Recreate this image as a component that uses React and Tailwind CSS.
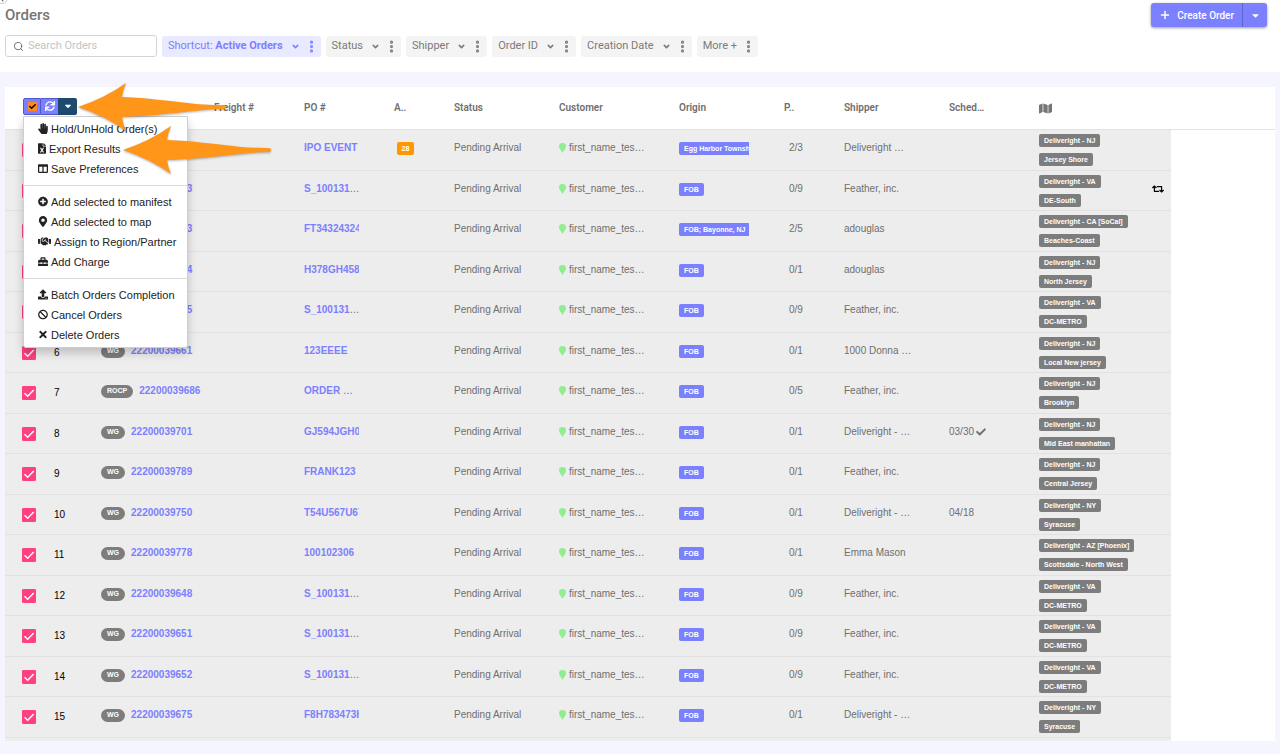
import React, { useState } from 'react';
import clsx from 'clsx';
import { ChevronDown, EllipsisVertical, Plus, Search } from 'lucide-react';
import {
  FaBan, FaCaretDown, FaCheck, FaChevronLeft, FaColumns, FaFileExcel, FaHandPaper, FaHandshake,
  FaMap, FaMapMarkerAlt, FaPlusCircle, FaRetweet, FaSync, FaTimes, FaToolbox, FaUpload
} from 'react-icons/fa';

const FILTERS = [
  { label: 'Shortcut:', value: 'Active Orders', active: true },
  { label: 'Status' },
  { label: 'Shipper' },
  { label: 'Order ID' },
  { label: 'Creation Date' },
  { label: 'More +', noCaret: true }
];

const MENU = [
  [
    { icon: FaHandPaper, size: 'w-[10px]', label: 'Hold/UnHold Order(s)' },
    { icon: FaFileExcel, size: 'w-2', label: 'Export Results' },
    { icon: FaColumns, size: 'w-[10px]', label: 'Save Preferences' }
  ],
  [
    { icon: FaPlusCircle, size: 'w-[10px]', label: 'Add selected to manifest' },
    { icon: FaMapMarkerAlt, size: 'w-[10px]', label: 'Add selected to map' },
    { icon: FaHandshake, size: 'w-[13px]', label: 'Assign to Region/Partner' },
    { icon: FaToolbox, size: 'w-[10px]', label: 'Add Charge' }
  ],
  [
    { icon: FaUpload, size: 'w-[10px]', label: 'Batch Orders Completion' },
    { icon: FaBan, size: 'w-[10px]', label: 'Cancel Orders' },
    { icon: FaTimes, size: 'w-[10px]', label: 'Delete Orders' }
  ]
];

const COL_WIDTHS = ['w-[39px]', 'w-[47px]', 'w-[113px]', 'w-[90px]', 'w-[90px]', 'w-[60px]', 'w-[105px]', 'w-[120px]', 'w-[105px]', 'w-[60px]', 'w-[105px]', 'w-[90px]', 'w-[105px]', 'w-[37px]', ''];

const ORDERS = [
  { type: 'WG', id: '', po: 'IPO EVENT', alert: 28, origin: 'Egg Harbor Township, NJ', pieces: '2/3', shipper: 'Deliveright …', tags: ['Deliveright - NJ', 'Jersey Shore'] },
  { type: 'WG', id: '22200039653', po: 'S_100131', more: true, origin: 'FOB', pieces: '0/9', shipper: 'Feather, inc.', tags: ['Deliveright - VA', 'DE-South'], swap: true },
  { type: 'WG', id: '22200039683', po: 'FT34324324', origin: 'FOB; Bayonne, NJ', pieces: '2/5', shipper: 'adouglas', tags: ['Deliveright - CA [SoCal]', 'Beaches-Coast'] },
  { type: 'WG', id: '22200039684', po: 'H378GH458', origin: 'FOB', pieces: '0/1', shipper: 'adouglas', tags: ['Deliveright - NJ', 'North Jersey'] },
  { type: 'WG', id: '22200039655', po: 'S_100131', more: true, origin: 'FOB', pieces: '0/9', shipper: 'Feather, inc.', tags: ['Deliveright - VA', 'DC-METRO'] },
  { type: 'WG', id: '22200039661', po: '123EEEE', origin: 'FOB', pieces: '0/1', shipper: '1000 Donna …', tags: ['Deliveright - NJ', 'Local New jersey'] },
  { type: 'ROCP', id: '22200039686', po: 'ORDER ', more: true, origin: 'FOB', pieces: '0/5', shipper: 'Feather, inc.', tags: ['Deliveright - NJ', 'Brooklyn'] },
  { type: 'WG', id: '22200039701', po: 'GJ594JGH0', origin: 'FOB', pieces: '0/1', shipper: 'Deliveright - …', sched: '03/30', confirmed: true, tags: ['Deliveright - NJ', 'Mid East manhattan'] },
  { type: 'WG', id: '22200039789', po: 'FRANK123', origin: 'FOB', pieces: '0/1', shipper: 'Feather, inc.', tags: ['Deliveright - NJ', 'Central Jersey'] },
  { type: 'WG', id: '22200039750', po: 'T54U567U67', origin: 'FOB', pieces: '0/1', shipper: 'Deliveright - …', sched: '04/18', tags: ['Deliveright - NY', 'Syracuse'] },
  { type: 'WG', id: '22200039778', po: '100102306', origin: 'FOB', pieces: '0/1', shipper: 'Emma Mason', tags: ['Deliveright - AZ [Phoenix]', 'Scottsdale - North West'] },
  { type: 'WG', id: '22200039648', po: 'S_100131', more: true, origin: 'FOB', pieces: '0/9', shipper: 'Feather, inc.', tags: ['Deliveright - VA', 'DC-METRO'] },
  { type: 'WG', id: '22200039651', po: 'S_100131', more: true, origin: 'FOB', pieces: '0/9', shipper: 'Feather, inc.', tags: ['Deliveright - VA', 'DC-METRO'] },
  { type: 'WG', id: '22200039652', po: 'S_100131', more: true, origin: 'FOB', pieces: '0/9', shipper: 'Feather, inc.', tags: ['Deliveright - VA', 'DC-METRO'] },
  { type: 'WG', id: '22200039675', po: 'F8H783473H', origin: 'FOB', pieces: '0/1', shipper: 'Deliveright - …', tags: ['Deliveright - NY', 'Syracuse'] }
];

function FilterChip({ filter }) {
  return (
    <div className={clsx('flex h-[21px] items-center rounded-[3px] pr-0.5 pl-1.5 text-[11px]', filter.active ? 'bg-[#e9e9ff] text-[#7b80ff]' : 'bg-[#f4f4f4] text-[#7a7a7a]')}>
      <button type="button" className="flex items-center gap-2 whitespace-nowrap">
        <span>{filter.label}{filter.value && <> <b className="font-bold">{filter.value}</b></>}</span>
        {!filter.noCaret && <ChevronDown className="size-[9px]" strokeWidth={4} />}
      </button>
      <button type="button" aria-label={`${filter.label} options`} className="ml-1">
        <EllipsisVertical className="size-[15px]" strokeWidth={3} />
      </button>
    </div>
  );
}

function ActionsMenu() {
  return (
    <ul className="absolute top-[18px] left-0 z-10 w-[165px] rounded-b-[3px] border border-[#cfcfcf] bg-white py-0.5 shadow-[0_5px_10px_rgba(0,0,0,0.2)]">
      {MENU.map((group, g) => (
        <React.Fragment key={g}>
          {g > 0 && <li className="my-1.5 h-px bg-[#dcdcdc]" />}
          {group.map(({ icon: Icon, size, label }) => (
            <li key={label}>
              <button type="button" className="flex h-5 w-full items-center gap-[3px] pl-3.5 text-[11px] font-normal whitespace-nowrap text-[#222]">
                <Icon className={clsx('h-[11px] shrink-0', size)} />
                {label}
              </button>
            </li>
          ))}
        </React.Fragment>
      ))}
    </ul>
  );
}

function Arrow({ className }) {
  return (
    <svg viewBox="0 0 150 52" className={clsx('pointer-events-none absolute z-20 h-[52px] w-[150px] drop-shadow-[0_1px_1px_rgba(0,0,0,0.3)]', className)}>
      <path fill="#ff9519" d="M0 25 Q27 16 48 1 Q45 8 44 15 C70 16 90 19 110 21 C125 23 137 23 145 23 Q148 23 148 25 Q148 27 145 27 C120 27 95 33 44 35 Q45 42 48 49 Q27 34 0 25Z" />
    </svg>
  );
}

function Tag({ children }) {
  return <span className="flex h-[13px] items-center rounded-[2px] bg-[#7d7d7d] px-[5px] text-[7px] font-bold text-white">{children}</span>;
}

function OrderRow({ order, number, checked, onToggle }) {
  const cell = 'border-b border-[#e2e2e2] bg-[#ededed] pt-2.5 pl-2.5 align-top whitespace-nowrap';
  return (
    <tr className="odd:h-[41px] even:h-[40px]">
      <td className="border-b border-[#e2e2e2] bg-[#ededed] pt-[13px] pl-[17px] align-top">
        <label className="grid size-[14px] place-items-center">
          <input type="checkbox" aria-label={`Select order ${number}`} checked={checked} onChange={onToggle} className="col-start-1 row-start-1 size-[14px] appearance-none rounded-[1px] border border-[#ff4081] checked:bg-[#ff4081]" />
          <svg viewBox="0 0 14 14" className="pointer-events-none col-start-1 row-start-1 size-[14px]">
            <path d="M2.5 7.2 5.7 10.2 11.7 4" fill="none" stroke="#fff" strokeWidth="1.5" />
          </svg>
        </label>
      </td>
      <td className={clsx(cell, 'text-black')}><div className="pt-0.5">{number}</div></td>
      <td className={cell}>
        <div className="flex h-4 items-center gap-1.5">
          <span className="flex h-[13px] items-center rounded-full bg-[#7d7d7d] px-1.5 text-[7px] font-bold text-white">{order.type}</span>
          <a href="#" className="font-bold text-[#7b80ff]">{order.id}</a>
        </div>
      </td>
      <td className={cell} />
      <td className={cell}>
        <div className="w-[55px] overflow-hidden whitespace-pre">
          <a href="#" className="font-bold text-[#7b80ff]">{order.po}</a>{order.more && '…'}
        </div>
      </td>
      <td className={cell}>
        {order.alert && <span className="mt-0.5 ml-[3px] flex h-[13px] w-[17px] items-center justify-center rounded-[2px] bg-[#ff9800] text-[7px] font-bold text-white">{order.alert}</span>}
      </td>
      <td className={cell}>Pending Arrival</td>
      <td className={cell}>
        <div className="flex items-center gap-[3px]">
          <svg viewBox="0 0 7 10" className="h-[10px] w-[7px]">
            <path fill="#90ee90" d="M3.5 0A3.5 3.5 0 0 1 7 3.6C7 5.8 5 7 3.5 10 2 7 0 5.8 0 3.6A3.5 3.5 0 0 1 3.5 0Z" />
          </svg>
          first_name_tes…
        </div>
      </td>
      <td className={cell}>
        <div className="flex w-[70px] overflow-hidden pt-0.5">
          <span className="flex h-[13px] shrink-0 items-center rounded-[2px] bg-[#7b80ff] px-[5px] text-[7px] font-bold text-white">{order.origin}</span>
        </div>
      </td>
      <td className={cell}><div className="pl-[5px]">{order.pieces}</div></td>
      <td className={cell}>{order.shipper}</td>
      <td className={cell}>
        <div className="flex items-center gap-0.5">
          {order.sched}
          {order.confirmed && <FaCheck className="size-[10px]" />}
        </div>
      </td>
      <td className="border-b border-[#e2e2e2] bg-[#ededed] pt-1 pl-2.5 align-top whitespace-nowrap">
        <div className="flex flex-col items-start gap-1.5">
          {order.tags.map((tag) => <Tag key={tag}>{tag}</Tag>)}
        </div>
      </td>
      <td className="border-b border-[#e2e2e2] bg-[#ededed] pt-2.5 pl-[18px] align-top">
        {order.swap && <FaRetweet className="h-4 w-3 text-black" />}
      </td>
      <td />
    </tr>
  );
}

export default function App() {
  const [selected, setSelected] = useState(() => ORDERS.map(() => true));
  const [menuOpen, setMenuOpen] = useState(true);
  const allSelected = selected.every(Boolean);

  return (
    <div className="min-h-screen bg-[#f5f5ff] font-['Liberation_Sans',Arial,sans-serif] text-[#6f6f6f]">
      <header className="relative overflow-hidden bg-white pt-[3px] pr-[13px] pb-[15px] pl-[5px] font-[Roboto,sans-serif]">
        <button type="button" aria-label="Collapse sidebar" className="absolute -top-2 -left-1 flex size-3 items-end justify-center rounded-full border border-[#ccc] bg-white pb-px text-[#555]">
          <FaChevronLeft className="size-[6px]" />
        </button>
        <div className="flex h-8 items-start justify-between">
          <h1 className="text-[15px] leading-6 font-medium text-[#757575]">Orders</h1>
          <div className="flex h-6 rounded-[3px] bg-[#7b80ff] text-[10px] font-medium text-white shadow-[0_1px_3px_rgba(0,0,0,0.4)]">
            <button type="button" className="flex items-center gap-1.5 border-r border-[#5f64cf] pr-2 pl-2">
              <Plus className="size-3" strokeWidth={3} />
              Create Order
            </button>
            <button type="button" aria-label="More create options" className="flex w-6 items-center justify-center">
              <FaCaretDown className="size-[11px]" />
            </button>
          </div>
        </div>
        <div className="flex flex-wrap items-center gap-[5px]">
          <label className="flex h-[22px] w-[152px] items-center gap-1 rounded-[3px] border border-[#d4d4d4] px-[7px]">
            <Search className="size-[11px] shrink-0 text-[#666]" strokeWidth={2} />
            <input type="text" aria-label="Search Orders" placeholder="Search Orders" className="w-full min-w-0 text-[11px] outline-none placeholder:text-[#c4c4c4]" />
          </label>
          {FILTERS.map((filter) => <FilterChip key={filter.label} filter={filter} />)}
        </div>
      </header>

      <main className="px-[5px] pt-[15px] pb-3">
        <div className="relative bg-white">
          <table className="w-full table-fixed border-separate border-spacing-0 text-left text-[10px] leading-4">
            <colgroup>
              {COL_WIDTHS.map((width, i) => <col key={i} className={width} />)}
            </colgroup>
            <thead className="font-[Roboto,sans-serif]">
              <tr className="h-[43px] [&>th]:border-b [&>th]:border-[#e2e2e2] [&>th]:pl-2.5 [&>th]:font-semibold">
                <th colSpan={3} className="pb-1">
                  <div className="relative ml-2 flex h-[17px] w-[54px] font-['Liberation_Sans',Arial,sans-serif]">
                    <label className="grid w-[18px] place-items-center rounded-l-[2px] border border-[#5458c8] bg-[#7b80ff]">
                      <input
                        type="checkbox"
                        aria-label="Select all orders"
                        checked={allSelected}
                        onChange={() => setSelected(ORDERS.map(() => !allSelected))}
                        className="col-start-1 row-start-1 size-[9px] appearance-none rounded-[1px] bg-white checked:bg-[#ff8a1c]"
                      />
                      <FaCheck className="pointer-events-none col-start-1 row-start-1 size-[7px] text-black" />
                    </label>
                    <button type="button" aria-label="Refresh" className="flex w-[17px] items-center justify-center border-y border-[#5458c8] bg-[#7b80ff] text-white">
                      <FaSync className="size-[10px]" />
                    </button>
                    <button type="button" aria-label="Actions" onClick={() => setMenuOpen(!menuOpen)} className="flex w-[19px] items-center justify-center rounded-r-[2px] bg-[#1f4a70] text-white">
                      <FaCaretDown className="size-[10px]" />
                    </button>
                    {menuOpen && <ActionsMenu />}
                  </div>
                </th>
                <th>Freight #</th>
                <th>PO #</th>
                <th>A..</th>
                <th>Status</th>
                <th>Customer</th>
                <th>Origin</th>
                <th>P..</th>
                <th>Shipper</th>
                <th>Sched…</th>
                <th><FaMap className="size-[13px] text-[#757575]" /></th>
                <th />
                <th />
              </tr>
            </thead>
            <tbody>
              {ORDERS.map((order, i) => (
                <OrderRow
                  key={i}
                  order={order}
                  number={i + 1}
                  checked={selected[i]}
                  onToggle={() => setSelected(selected.map((value, n) => (n === i ? !value : value)))}
                />
              ))}
            </tbody>
          </table>
          <div className="h-[3px] w-[1166px] bg-[#ededed]" />
          <Arrow className="-top-[5px] left-[73px]" />
          <Arrow className="top-[38px] left-[118px]" />
        </div>
      </main>
    </div>
  );
}
